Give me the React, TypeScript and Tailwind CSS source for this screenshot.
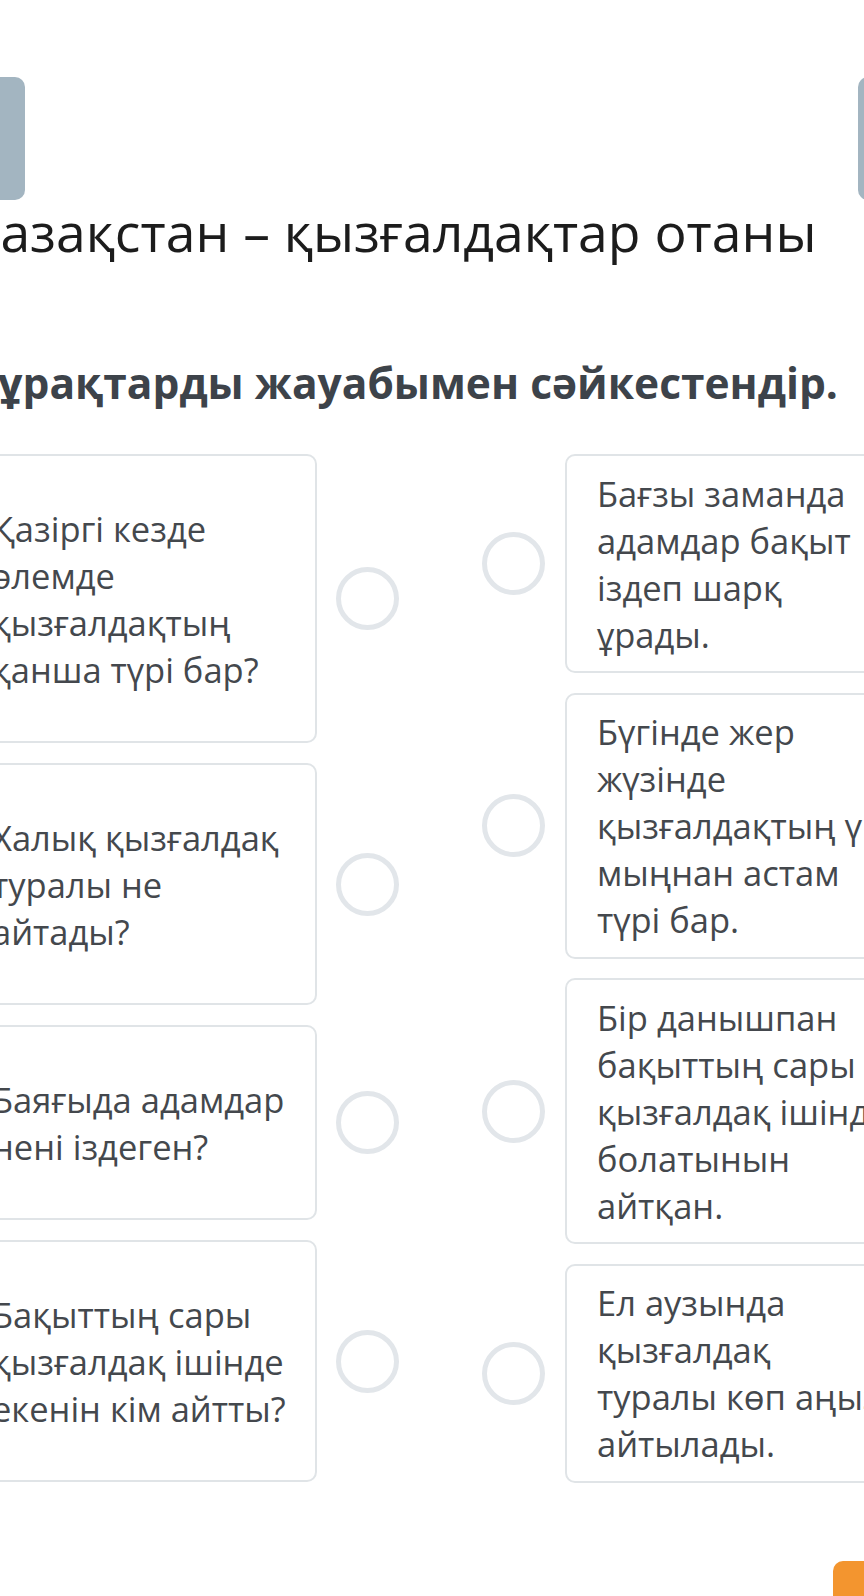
import React from 'react';

const questions: string[][] = [
  ['Қазіргі кезде', 'әлемде', 'қызғалдақтың', 'қанша түрі бар?'],
  ['Халық қызғалдақ', 'туралы не', 'айтады?'],
  ['Баяғыда адамдар', 'нені іздеген?'],
  ['Бақыттың сары', 'қызғалдақ ішінде', 'екенін кім айтты?'],
];

const answers: string[][] = [
  ['Бағзы заманда', 'адамдар бақыт', 'іздеп шарқ', 'ұрады.'],
  ['Бүгінде жер', 'жүзінде', 'қызғалдақтың үш', 'мыңнан астам', 'түрі бар.'],
  ['Бір данышпан', 'бақыттың сары', 'қызғалдақ ішінде', 'болатынын', 'айтқан.'],
  ['Ел аузында', 'қызғалдақ', 'туралы көп аңыз', 'айтылады.'],
];

const Dot = () => (
  <div className="w-[63px] h-[63px] shrink-0 rounded-full border-[5px] border-[#e2e6ea] bg-white" />
);

const Lines = ({ lines }: { lines: string[] }) => (
  <div className="text-[34.5px] leading-[47px] text-[#44484d]">
    {lines.map((l, i) => (
      <div key={i} className="whitespace-nowrap">{l}</div>
    ))}
  </div>
);

export default function App() {
  return (
    <div
      className="w-[864px] h-[1596px] overflow-hidden bg-white relative"
      style={{ fontFamily: '"Open Sans", "Noto Sans", sans-serif' }}
    >
      {/* prev / next buttons */}
      <div className="flex justify-between -mx-[35px] pt-[77px]">
        <div className="w-[60px] h-[123px] rounded-[10px] bg-[#a3b5c1]" />
        <div className="w-[41px] h-[123px] rounded-[10px] bg-[#a3b5c1]" />
      </div>

      <h1 className="-ml-[35px] whitespace-nowrap text-[53.5px] leading-[64px] text-[#1c1c1c]">
        Қазақстан – қызғалдақтар отаны
      </h1>

      <h2 className="-ml-[29px] mt-[93px] whitespace-nowrap text-[42.5px] leading-[52px] font-bold text-[#3d434a]">
        Сұрақтарды жауабымен сәйкестендір.
      </h2>

      <div className="flex -ml-[40px] mt-[45px]">
        <div className="flex flex-col gap-[20px]">
          {questions.map((q, i) => (
            <div key={i} className="flex items-center gap-[19px]">
              <div className="w-[357px] shrink-0 rounded-[10px] border-2 border-[#e0e4e7] px-[30px] py-[48.5px] overflow-hidden">
                <Lines lines={q} />
              </div>
              <Dot />
            </div>
          ))}
        </div>

        <div className="flex flex-col gap-[19.5px] ml-[83px]">
          {answers.map((a, i) => (
            <div key={i} className="flex items-center gap-[20px]">
              <Dot />
              <div className="w-[357px] shrink-0 rounded-[10px] border-2 border-[#e0e4e7] px-[30px] py-[13.5px] overflow-hidden">
                <Lines lines={a} />
              </div>
            </div>
          ))}
        </div>
      </div>

      <div className="flex justify-end -mr-[30px] mt-[78px]">
        <div className="w-[61px] h-[60px] rounded-[10px] bg-[#f3952f]" />
      </div>
    </div>
  );
}
